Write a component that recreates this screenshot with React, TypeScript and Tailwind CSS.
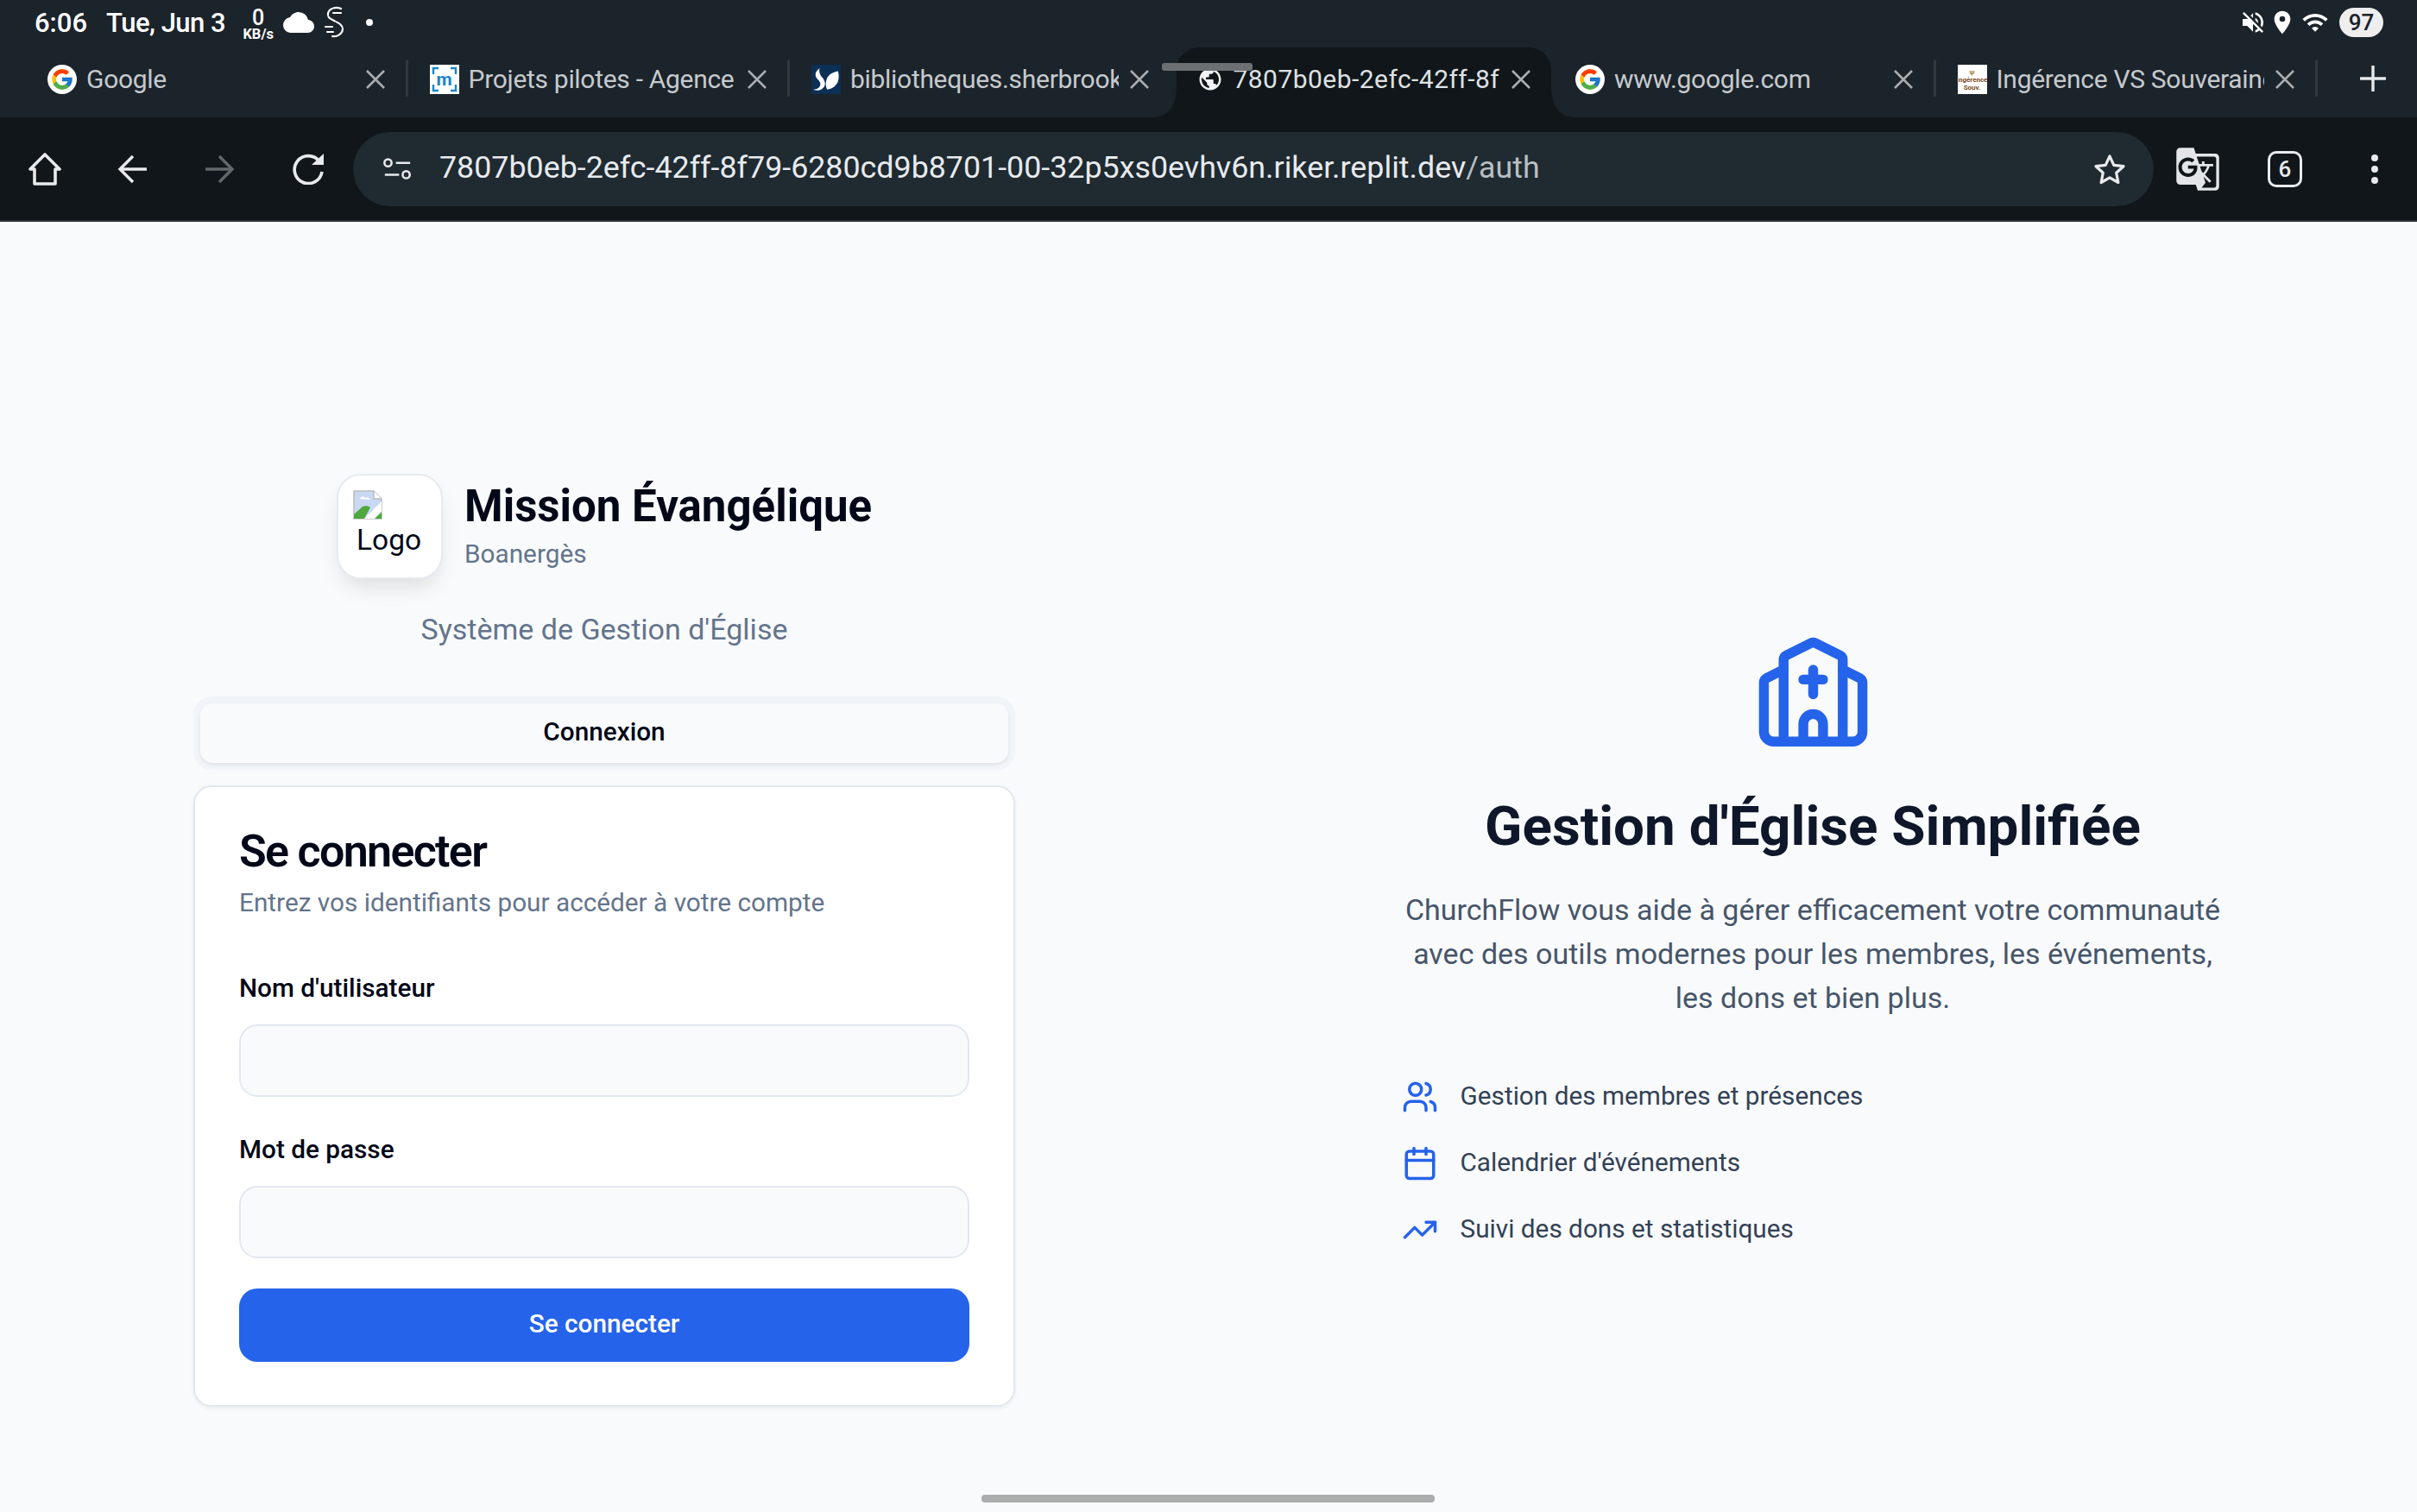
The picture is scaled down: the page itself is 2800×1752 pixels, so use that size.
import { Calendar, TrendingUp, Users } from 'lucide-react';
import { FcGoogle } from 'react-icons/fc';
import { MdCloud, MdGTranslate, MdLocationOn, MdPublic, MdVolumeOff, MdWifi } from 'react-icons/md';

const GoogleIcon = () => (
  <span className="flex h-[34px] w-[34px] shrink-0 items-center justify-center rounded-full bg-white">
    <FcGoogle size={28} />
  </span>
);

const PilotIcon = () => (
  <span className="relative flex h-[34px] w-[34px] shrink-0 items-center justify-center bg-white text-[21px] font-bold leading-none text-[#1a86c8]">
    <svg className="absolute inset-0" width="34" height="34" viewBox="0 0 34 34" fill="none" stroke="#1a86c8" strokeWidth="2.4">
      <path d="M10 4H4v7M24 4h6v7M10 30H4v-7M24 30h6v-7" />
    </svg>
    m
  </span>
);

const LibraryIcon = () => (
  <span className="flex h-[34px] w-[34px] shrink-0 items-center justify-center bg-[#0b2f55]">
    <svg width="32" height="32" viewBox="0 0 30 30" fill="#fff">
      <path d="M8 3C3 6 2 11 6 15c3 3 4 6 1 9-2 2-4 2-6 2 5 2 9 1 12-3 2-4 0-8-3-11-2-3-3-6-2-9z" />
      <path d="M28 6c-7 1-12 5-13 11-1 3 0 6 1 9 6-1 10-4 12-9 1-4 1-7 0-11z" />
    </svg>
  </span>
);

const GlobeIcon = () => (
  <span className="flex h-[30px] w-[30px] shrink-0 items-center justify-center">
    <MdPublic size={36} color="#f1f3f4" />
  </span>
);

const BookIcon = () => (
  <span className="flex h-[34px] w-[34px] shrink-0 flex-col items-center justify-center bg-white text-[8px] font-bold leading-[9px] text-[#7a4a1e]">
    <span className="text-[#a87a3a]">ψ</span>
    <span>Ingérence</span>
    <span>Souv.</span>
  </span>
);

const CloseIcon = () => (
  <svg width="24" height="22" viewBox="0 0 24 22" className="shrink-0" stroke="#a9adb0" strokeWidth="2.6" fill="none">
    <path d="M2 1l20 20M22 1L2 21" />
  </svg>
);

const ChurchIcon = () => (
  <svg
    width="137"
    height="137"
    viewBox="0 0 24 24"
    fill="none"
    stroke="#2563eb"
    strokeWidth="2"
    strokeLinecap="round"
    strokeLinejoin="round"
    className="mx-auto shrink-0"
  >
    <path d="M10 9h4" />
    <path d="M12 7v5" />
    <path d="M14 21.6V18a2 2 0 0 0-4 0v3.6" />
    <path d="M18 7l3.5 1.75a1 1 0 0 1 .5.9V19.6a2 2 0 0 1-2 2H4a2 2 0 0 1-2-2V9.65a1 1 0 0 1 .5-.9L6 7" />
    <path d="M18 21.6V5a1 1 0 0 0-.55-.9l-5-2.5a1 1 0 0 0-.9 0l-5 2.5A1 1 0 0 0 6 5v16.6" />
  </svg>
);

const tabs = [
  { title: 'Google', icon: <GoogleIcon />, sep: true },
  { title: 'Projets pilotes - Agence', icon: <PilotIcon />, sep: true },
  { title: 'bibliotheques.sherbrooke.ca', icon: <LibraryIcon />, sep: false },
  { title: '7807b0eb-2efc-42ff-8f79-6280', icon: <GlobeIcon />, sep: false, active: true },
  { title: 'www.google.com', icon: <GoogleIcon />, sep: true },
  { title: 'Ingérence VS Souveraineté', icon: <BookIcon />, sep: true },
];

const Tab = ({ title, icon, sep, active }: { title: string; icon: React.ReactNode; sep: boolean; active?: boolean }) => (
  <div className="relative flex h-[81px] w-[442.5px] shrink-0 items-start">
    {active && (
      <div className="absolute left-[4px] top-0 h-[81px] w-[434px] rounded-t-[26px] bg-[#101619]">
        <svg className="absolute bottom-0 left-[-28px]" width="28" height="36" viewBox="0 0 28 36" fill="#101619">
          <path d="M28 0v36H0c16 0 28-10 28-36z" />
        </svg>
        <svg className="absolute bottom-0 right-[-28px]" width="28" height="36" viewBox="0 0 28 36" fill="#101619">
          <path d="M0 0v36h28C12 36 0 26 0 0z" />
        </svg>
      </div>
    )}
    <div className={`relative mt-[20px] flex h-[34px] w-full items-center pr-[27px] ${active ? 'pl-[28px]' : 'pl-[24px]'}`}>
      {icon}
      <span
        className={`mr-[12px] flex-1 overflow-hidden whitespace-nowrap text-[30px] leading-[36px] ${
          active ? 'ml-[12px] tracking-[0.45px] text-[#dfe2e4]' : 'ml-[11px] tracking-[-0.3px] text-[#c6cacd]'
        }`}
      >
        {title}
      </span>
      <CloseIcon />
    </div>
    {sep && <div className="absolute right-[1px] top-[14px] h-[43px] w-[3px] rounded bg-[#30393f]" />}
  </div>
);

const StatusBar = () => (
  <div className="flex h-[55px] items-start justify-between pl-[40px] pr-[39px] pt-[8px] text-white">
    <div className="flex h-[36px] items-center">
      <span className="text-[31px] font-medium leading-none">6:06</span>
      <span className="ml-[22px] text-[31px] font-medium leading-none tracking-[-0.5px]">Tue, Jun 3</span>
      <div className="ml-[19px] flex w-[38px] flex-col items-center pt-[4px]">
        <span className="text-[25px] font-medium leading-[22px]">0</span>
        <span className="text-[16.5px] font-bold leading-[15px]">KB/s</span>
      </div>
      <MdCloud size={36} className="ml-[10px]" />
      <svg width="28" height="38" viewBox="0 0 28 38" className="ml-[10px]" fill="none" stroke="#fff" strokeWidth="2.2" strokeLinecap="round">
        <path d="M21 3c-8-3-16 1-15 8 1 6 16 7 17 15 0 6-6 10-12 9" strokeDasharray="9 2" />
        <path d="M12 8h9M3 24h8M5 30h7" />
      </svg>
      <span className="ml-[22px] h-[8px] w-[8px] rounded-full bg-white" />
    </div>
    <div className="flex h-[36px] items-center">
      <MdVolumeOff size={32} />
      <MdLocationOn size={32} className="ml-[2px]" />
      <MdWifi size={32} className="ml-[6px]" />
      <span className="ml-[12px] flex h-[34px] w-[51px] items-center justify-center rounded-[17px] bg-[#eeeeee] text-[26px] font-medium leading-none text-[#1b232b]">
        97
      </span>
    </div>
  </div>
);

const TabStrip = () => (
  <div className="relative flex h-[81px] items-start pl-[31px]">
    {tabs.map((t) => (
      <Tab key={t.title} {...t} />
    ))}
    <svg width="32" height="32" viewBox="0 0 32 32" className="ml-[47px] mt-[20px] shrink-0" stroke="#e6e8ea" strokeWidth="3.4">
      <path d="M16 1v30M1 16h30" />
    </svg>
    <div className="absolute left-[1346px] top-[18px] h-[9px] w-[105px] rounded-[3px] bg-[#6d7073]" />
  </div>
);

const Toolbar = () => (
  <div className="flex h-[121px] items-center border-b-2 border-[#2f353a] bg-[#101619] pl-[33px]">
    <svg width="38" height="38" viewBox="0 0 38 38" fill="none" stroke="#e8eaed" strokeWidth="3.6" strokeLinejoin="round" className="shrink-0">
      <path d="M19 2L36 19H31V36H7V19H2Z" />
    </svg>
    <svg width="34" height="34" viewBox="0 0 34 34" fill="none" stroke="#e8eaed" strokeWidth="3.4" className="ml-[65px] shrink-0">
      <path d="M34 17H3M18 2L3 17l15 15" />
    </svg>
    <svg width="34" height="34" viewBox="0 0 34 34" fill="none" stroke="#62676a" strokeWidth="3.4" className="ml-[68px] shrink-0">
      <path d="M0 17h31M16 2l15 15-15 15" />
    </svg>
    <svg width="38" height="36" viewBox="0 0 38 36" fill="none" className="ml-[67px] shrink-0">
      <path d="M31 9A16 16 0 1 0 34 21" stroke="#e8eaed" strokeWidth="3.6" />
      <path d="M22 13h14V0z" fill="#e8eaed" />
    </svg>
    <div className="ml-[32px] flex h-[86px] w-[2086px] shrink-0 items-center rounded-[43px] bg-[#1f2a31] pl-[35px] pr-[32px]">
      <svg width="33" height="28" viewBox="0 0 36 28" fill="none" stroke="#e8eaed" strokeWidth="2.8" className="shrink-0">
        <circle cx="6" cy="6" r="4.5" />
        <path d="M16 6h18M2 21h18" />
        <circle cx="29" cy="21" r="4.5" />
      </svg>
      <span className="ml-[32px] mb-[1px] flex-1 whitespace-nowrap text-[35.8px] leading-none text-[#e8eaed]">
        7807b0eb-2efc-42ff-8f79-6280cd9b8701-00-32p5xs0evhv6n.riker.replit.dev<span className="text-[#b9bec2]">/auth</span>
      </span>
      <svg width="38" height="36" viewBox="0 0 38 36" fill="none" stroke="#e8eaed" strokeWidth="3.2" strokeLinejoin="round" className="shrink-0">
        <path d="M19 3l4.8 10.4 11.2 1.3-8.3 7.6 2.2 11.2L19 27.9 9.1 33.5l2.2-11.2L3 14.7l11.2-1.3z" />
      </svg>
    </div>
    <MdGTranslate size={54} color="#e3e5e8" className="ml-[24px] shrink-0" />
    <span className="ml-[54px] flex h-[42px] w-[40px] shrink-0 items-center justify-center rounded-[10px] border-[3px] border-[#e8eaed] text-[26px] font-medium leading-none text-[#e8eaed]">
      6
    </span>
    <div className="ml-[80px] flex h-[34px] shrink-0 flex-col justify-between">
      <span className="h-[8px] w-[8px] rounded-full bg-[#e8eaed]" />
      <span className="h-[8px] w-[8px] rounded-full bg-[#e8eaed]" />
      <span className="h-[8px] w-[8px] rounded-full bg-[#e8eaed]" />
    </div>
  </div>
);

const BrokenImage = () => (
  <svg width="34" height="34" viewBox="0 0 34 34" className="ml-[-4px]">
    <path d="M1 1h23l9 9v23H1z" fill="#c9d8f3" stroke="#b9bcc0" strokeWidth="1.5" />
    <path d="M24 1v9h9" fill="#fff" stroke="#b9bcc0" strokeWidth="1.5" />
    <path d="M1 33v-5l10-9c3-1 7-1 9 1l-7 13z" fill="#4fa83d" />
    <path d="M7 10l4-3 3 2 3-1 3 3z" fill="#fff" />
    <path d="M13 33l20-20v20z" fill="#fff" />
    <path d="M25 33l8-8v8z" fill="#4fa83d" />
  </svg>
);

const Field = ({ label, className }: { label: string; className: string }) => (
  <div className={className}>
    <label className="block text-[29.75px] font-medium leading-[42px] text-[#020817]">{label}</label>
    <input className="mt-[21px] block h-[84px] w-full rounded-[21px] border-2 border-[#e2e8f0] bg-[#f8fafc]" />
  </div>
);

const LoginColumn = () => (
  <div className="flex w-[952px] flex-col">
    <div className="flex items-start justify-center gap-[25px]">
      <div className="h-[122px] w-[123px] shrink-0 rounded-[28px] border-2 border-[#e6ebf1] bg-white pl-[21px] pt-[17px] shadow-[0_14px_26px_-6px_rgba(0,0,0,0.12)]">
        <BrokenImage />
        <span className="mt-[3px] block text-[33.5px] leading-[42px] text-[#020817]">Logo</span>
      </div>
      <div className="pt-[6px]">
        <h1 className="text-[51px] font-bold leading-[64px] text-[#020817]">Mission Évangélique</h1>
        <p className="mt-[5px] text-[29.75px] leading-[36px] text-[#64748b]">Boanergès</p>
      </div>
    </div>
    <p className="mt-[34px] text-center text-[34px] leading-[49px] text-[#64748b]">Système de Gestion d'Église</p>
    <div className="mt-[53px] flex h-[85px] w-full rounded-[21px] bg-[#f1f5f9] p-[8px]">
      <div className="flex flex-1 items-center justify-center rounded-[14px] bg-[#f8fafc] pb-[2px] text-[29.75px] font-medium text-[#020817] shadow-[0_2px_4px_rgba(0,0,0,0.08)]">
        Connexion
      </div>
    </div>
    <div className="mt-[18px] h-[720px] rounded-[21px] border-2 border-[#e2e8f0] bg-white px-[51px] pt-[54px] shadow-[0_2px_4px_rgba(0,0,0,0.06)]">
      <h2 className="text-[52px] font-semibold leading-[42px] tracking-[-1.7px] text-[#020817]">Se connecter</h2>
      <p className="mt-[17px] text-[29.75px] leading-[42px] text-[#64748b]">Entrez vos identifiants pour accéder à votre compte</p>
      <Field label="Nom d'utilisateur" className="mt-[57px]" />
      <Field label="Mot de passe" className="mt-[40px]" />
      <button className="mt-[35px] h-[85px] w-full rounded-[21px] bg-[#2563eb] pb-[2px] text-[29.75px] font-medium text-white">
        Se connecter
      </button>
    </div>
  </div>
);

const features = [
  { icon: Users, text: 'Gestion des membres et présences' },
  { icon: Calendar, text: "Calendrier d'événements" },
  { icon: TrendingUp, text: 'Suivi des dons et statistiques' },
];

const HeroColumn = () => (
  <div className="flex w-[953px] flex-col pt-[2px]">
    <ChurchIcon />
    <h2 className="mt-[50px] text-center text-[63.75px] font-bold leading-[70px] text-[#0f172a]">Gestion d'Église Simplifiée</h2>
    <p className="mt-[36px] text-center text-[34px] leading-[51px] text-[#475569]">
      ChurchFlow vous aide à gérer efficacement votre communauté
      <br />
      avec des outils modernes pour les membres, les événements,
      <br />
      les dons et bien plus.
    </p>
    <ul className="mt-[68px] flex flex-col gap-[35px]">
      {features.map(({ icon: Icon, text }) => (
        <li key={text} className="flex h-[42px] items-center gap-[26px] text-[29.75px] text-[#334155]">
          <Icon size={42} strokeWidth={2} className="shrink-0 text-[#2563eb]" />
          {text}
        </li>
      ))}
    </ul>
  </div>
);

const App = () => {
  return (
    <div className="relative flex h-[1752px] w-[2800px] flex-col overflow-hidden bg-[#f8fafc] font-[Roboto,sans-serif]">
      <div className="bg-[#1b232b]">
        <StatusBar />
        <TabStrip />
      </div>
      <Toolbar />
      <main className="grid grid-cols-2 items-center justify-items-center pt-[292px]">
        <LoginColumn />
        <HeroColumn />
      </main>
      <div className="absolute bottom-[11px] left-[1137px] h-[9px] w-[525px] rounded-[4px] bg-[#aaadab]" />
    </div>
  );
};

export default App;
